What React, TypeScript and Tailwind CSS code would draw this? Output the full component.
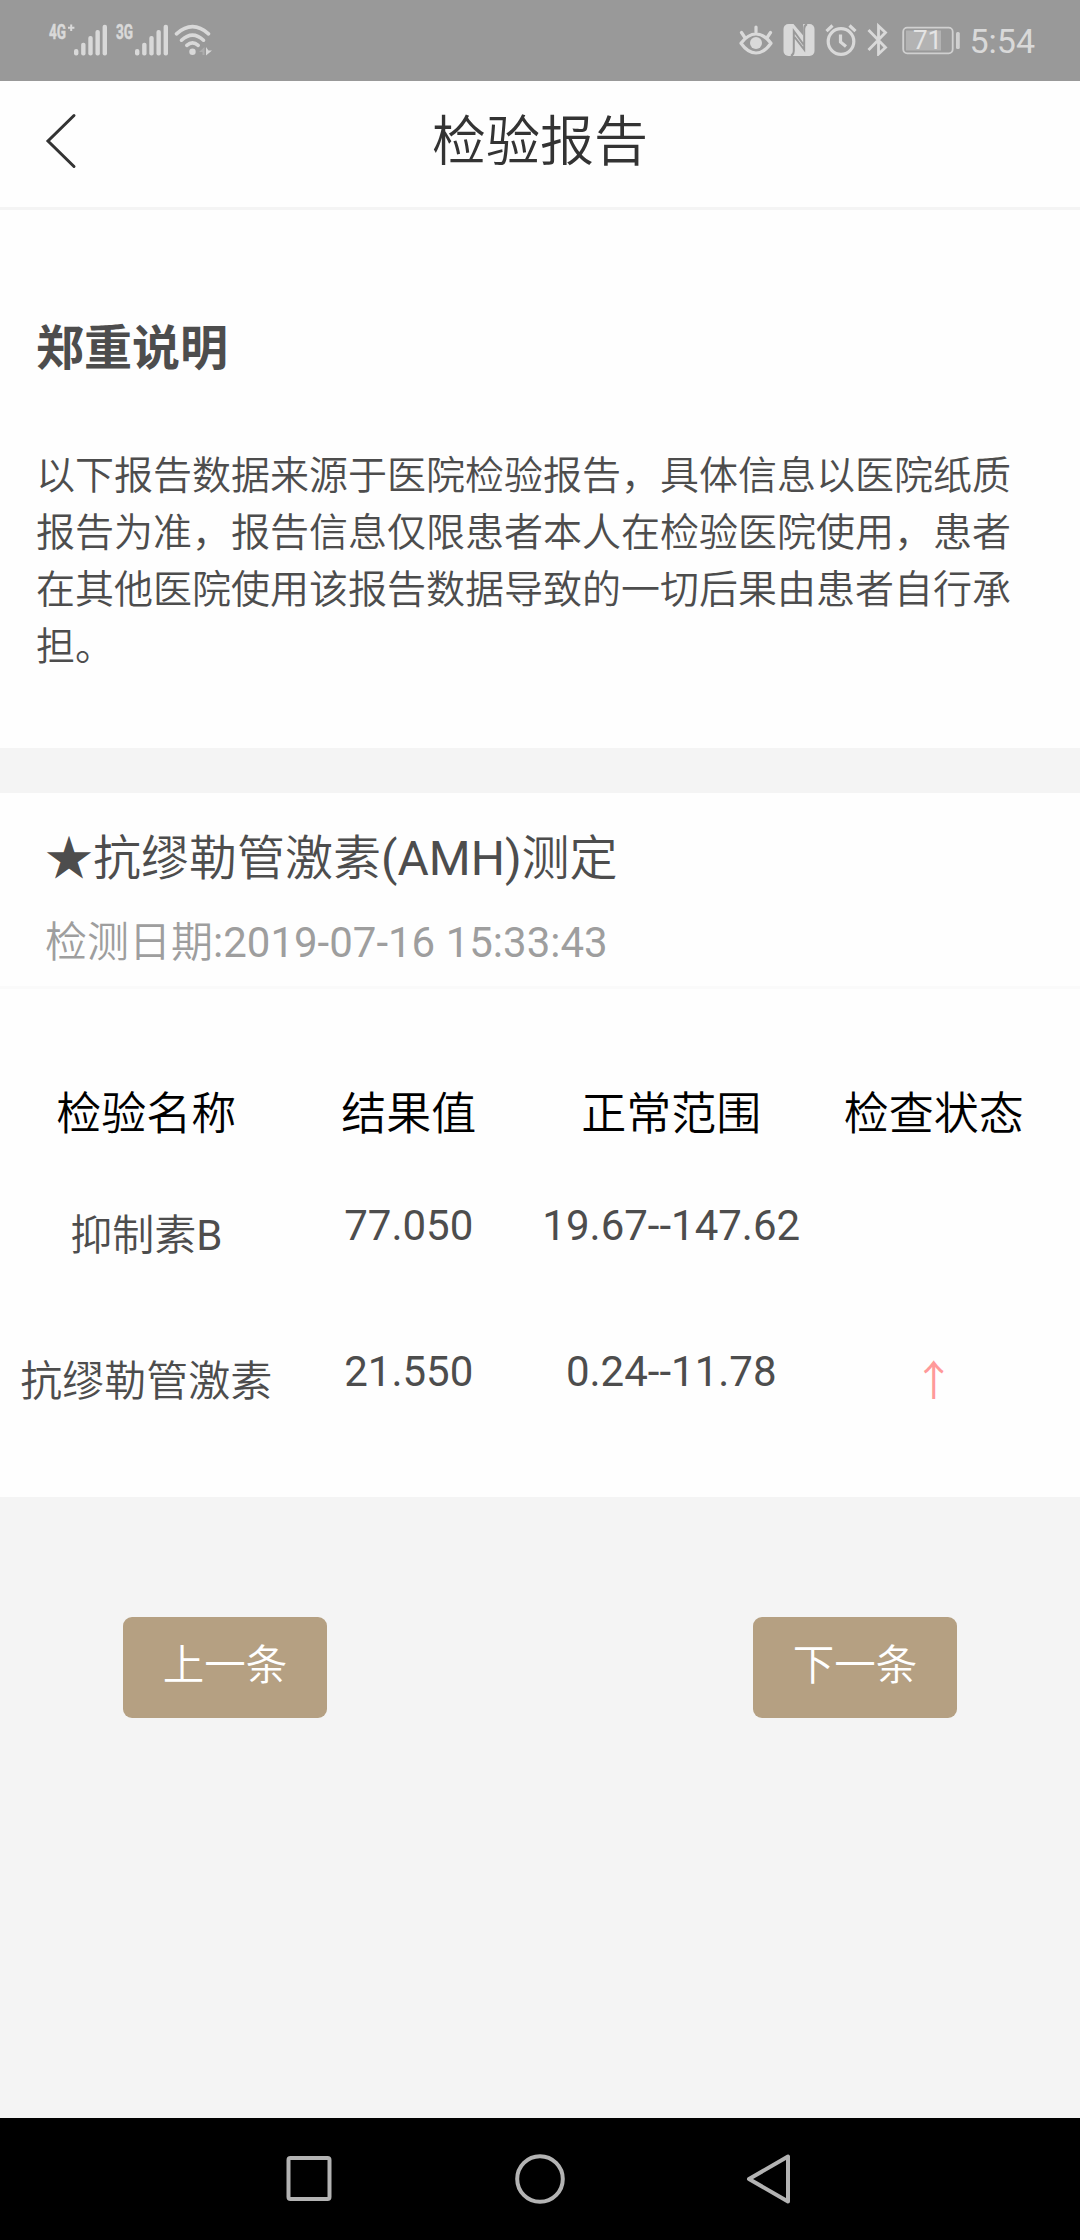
type SignalProps = {
  label: string;
  labelWidth: number;
  plus?: boolean;
};

// bar tops, left to right, inside a 36px high icon
const bars = [26, 19.7, 13, 7, 1.7];

function Signal({ label, labelWidth, plus }: SignalProps) {
  const width = plus ? 56 : 50;
  const start = width - 31;
  return (
    <svg
      className="overflow-visible"
      width={width}
      height="36"
      viewBox={`0 0 ${width} 36`}
      fill="#d9d9d9"
    >
      <text
        x="0"
        y="15.5"
        fontSize="20"
        fontWeight="700"
        stroke="#d9d9d9"
        strokeWidth="0.5"
        textLength={labelWidth}
        lengthAdjust="spacingAndGlyphs"
      >
        {label}
      </text>
      {plus && <path d="M19 4.8h6.4M22.2 1.6V8" stroke="#d9d9d9" strokeWidth="2" />}
      {bars.map((top, i) => (
        <rect key={top} x={start + i * 7.15} y={top} width="4.4" height={32.5 - top} rx="2" />
      ))}
    </svg>
  );
}

function WifiIcon() {
  return (
    <svg width="38" height="36" viewBox="0 0 38 36" fill="none" stroke="#d9d9d9" strokeWidth="3.6" strokeLinecap="round">
      <path d="M2.5 10.8Q18.5 -3.5 34.5 10.8" />
      <path d="M7.5 17.2Q18.5 7 29.5 17.2" />
      <path d="M12.8 22.4Q18.5 17.4 24.2 22.4" />
      <circle cx="18.5" cy="28.7" r="3.2" fill="#d9d9d9" stroke="none" />
      <path d="M30.5 24v8h-2v-3h-3.5z" fill="#adadad" stroke="none" />
      <path d="M32 24l2.5 3.5h3.5l-6 5z" fill="#d9d9d9" stroke="none" />
    </svg>
  );
}

function EyeIcon() {
  return (
    <svg width="34" height="36" viewBox="0 0 34 36" fill="none" stroke="#d9d9d9" strokeWidth="3.2" strokeLinecap="round">
      <path d="M2 23.2Q9 14 17 14T32 23.2Q25 33 17 33T2 23.2z" strokeLinejoin="round" />
      <circle cx="17" cy="23" r="6" fill="#d9d9d9" stroke="none" />
      <path d="M17 7v5M2.5 12.5l3 4.5M31.5 12.5l-3 4.5" />
    </svg>
  );
}

function NfcIcon() {
  return (
    <svg width="32" height="36" viewBox="0 0 32 36">
      <rect x="0.5" y="4" width="31" height="32" rx="5" fill="#d9d9d9" />
      <path
        d="M8 36Q10.8 34.500 10.8 31V11L20.5 24.500M24 4Q21.200 5.500 21.200 9V29.500L11.500 17"
        fill="none"
        stroke="#999"
        strokeWidth="2"
      />
      <path d="M10.500 4H20.200V15.500z" fill="#999" />
    </svg>
  );
}

function AlarmIcon() {
  return (
    <svg width="32" height="36" viewBox="0 0 32 36" fill="none" stroke="#d9d9d9" strokeWidth="3.2">
      <circle cx="16" cy="21.5" r="12.8" />
      <path d="M15.5 14.5v7.5l5.5 4.5" />
      <path d="M1.5 11.2L7.5 5.5M30.5 11.2L24.5 5.5" />
    </svg>
  );
}

function BluetoothIcon() {
  return (
    <svg width="22" height="36" viewBox="0 0 22 36" fill="none" stroke="#d9d9d9" strokeWidth="2.8">
      <path d="M1.5 10L18.5 27.5L11.5 34V6L18.5 12.5L1.5 30" />
    </svg>
  );
}

function Battery() {
  return (
    <svg width="60" height="36" viewBox="0 0 60 36">
      <rect x="1.2" y="7.7" width="49.5" height="25.6" rx="4" fill="none" stroke="#d0d0d0" strokeWidth="1.8" />
      <rect x="4" y="10.5" width="35" height="20" fill="#b3b3b3" />
      <rect x="54" y="12" width="3.8" height="17" rx="1.5" fill="#d0d0d0" />
      <text x="25.5" y="29" fontSize="26" textAnchor="middle" fill="#e4e4e4">
        71
      </text>
    </svg>
  );
}

const headers = ["检验名称", "结果值", "正常范围", "检查状态"];

const rows = [
  { name: "抑制素B", value: "77.050", range: "19.67--147.62", high: false },
  { name: "抗缪勒管激素", value: "21.550", range: "0.24--11.78", high: true },
];

function StatusBar() {
  return (
    <div className="flex h-[81px] shrink-0 items-start justify-between bg-[#999] pl-[49px] pr-[45px]">
      <div className="flex items-start pt-[23px]">
        <Signal label="4G" labelWidth={17} plus />
        <div className="ml-[11px]">
          <Signal label="3G" labelWidth={17} />
        </div>
        <div className="ml-2">
          <WifiIcon />
        </div>
      </div>
      <div className="flex items-start pt-5">
        <EyeIcon />
        <div className="ml-[10px]">
          <NfcIcon />
        </div>
        <div className="ml-[10px]">
          <AlarmIcon />
        </div>
        <div className="ml-[10px]">
          <BluetoothIcon />
        </div>
        <div className="ml-[13px]">
          <Battery />
        </div>
        <span className="ml-[7px] text-[34px] leading-[42px] text-[#d9d9d9]">5:54</span>
      </div>
    </div>
  );
}

function Header() {
  return (
    <header className="grid h-[129px] shrink-0 grid-cols-3 items-center border-b-[3px] border-[#f4f4f4] bg-[#fefefe] pb-[6px]">
      <button type="button" className="pl-[45px]">
        <svg width="32" height="56" viewBox="0 0 32 56" fill="none" stroke="#333" strokeWidth="3" strokeLinecap="round">
          <path d="M29 2.5L3 28L29 53.5" />
        </svg>
      </button>
      <h1 className="pt-[3px] text-center text-[54px] leading-[72px] text-[#333]">检验报告</h1>
    </header>
  );
}

function NavBar() {
  return (
    <nav className="flex h-[122px] shrink-0 items-center justify-between bg-black pl-[283px] pr-[286px]">
      <svg width="52" height="52" viewBox="0 0 52 52" fill="none" stroke="#b3b3b3" strokeWidth="4">
        <rect x="5.5" y="5" width="41" height="41" rx="2" />
      </svg>
      <svg width="52" height="52" viewBox="0 0 52 52" fill="none" stroke="#b3b3b3" strokeWidth="4">
        <circle cx="27" cy="26" r="22.8" />
      </svg>
      <svg width="52" height="52" viewBox="0 0 52 52" fill="none" stroke="#b3b3b3" strokeWidth="4" strokeLinejoin="round">
        <path d="M46 3.5V48.5L7 26z" />
      </svg>
    </nav>
  );
}

export default function App() {
  return (
    <div className="flex h-[2240px] w-[1080px] flex-col bg-[#f4f4f4] font-[Roboto,'Noto_Sans_CJK_SC_DemiLight','Noto_Sans_CJK_SC',sans-serif] text-[#4d4d4d]">
      <StatusBar />
      <Header />

      <section className="h-[538px] bg-[#fefefe] px-9 pt-[103px]">
        <h2 className="font-[Roboto,'Noto_Sans_CJK_SC',sans-serif] text-[48px] font-bold leading-[72px]">郑重说明</h2>
        <p className="mt-[63px] text-[39px] leading-[57px]">
          以下报告数据来源于医院检验报告，具体信息以医院纸质报告为准，报告信息仅限患者本人在检验医院使用，患者在其他医院使用该报告数据导致的一切后果由患者自行承担。
        </p>
      </section>

      <section className="mt-[45px] h-[704px] bg-[#fefefe]">
        <div className="h-[196px] border-b-[3px] border-[#fafafa] px-[45px] pt-[30px]">
          <h3 className="text-[48px] leading-[72px]">★抗缪勒管激素(AMH)测定</h3>
          <p className="mt-[12px] text-[42px] leading-[72px] text-[#9e9e9e]">检测日期:2019-07-16 15:33:43</p>
        </div>
        <div className="px-[15px] pt-[90px] text-center">
          <div className="grid grid-cols-4 text-[45px] leading-[72px] text-black">
            {headers.map((header) => (
              <div key={header}>{header}</div>
            ))}
          </div>
          <div className="pt-[39px]">
            {rows.map((row) => (
              <div key={row.name} className="grid h-[146px] grid-cols-4 whitespace-nowrap text-[42px] leading-[72px]">
                <div className="pt-[10px]">{row.name}</div>
                <div>{row.value}</div>
                <div>{row.range}</div>
                <div className="pt-[10px] font-[Roboto,'Noto_Sans_CJK_SC',sans-serif] text-[#f99]">
                  {row.high ? "↑" : ""}
                </div>
              </div>
            ))}
          </div>
        </div>
      </section>

      <div className="mt-[120px] flex justify-between px-[123px]">
        <button type="button" className="h-[101px] w-[204px] rounded-[9px] bg-[#b5a082] pb-[2px] text-[41.5px] text-white">
          上一条
        </button>
        <button type="button" className="h-[101px] w-[204px] rounded-[9px] bg-[#b5a082] pb-[2px] text-[41.5px] text-white">
          下一条
        </button>
      </div>

      <div className="flex-1" />
      <NavBar />
    </div>
  );
}
